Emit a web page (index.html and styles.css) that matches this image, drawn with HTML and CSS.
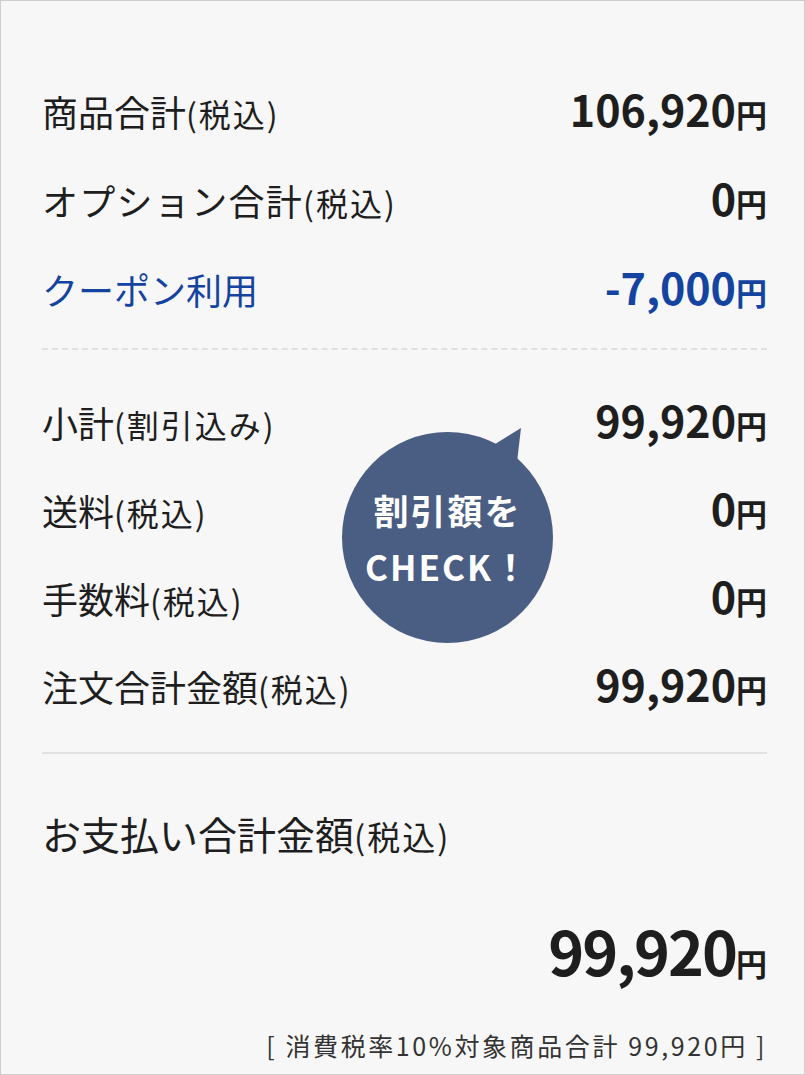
FILE: index.html
```html
<!DOCTYPE html>
<html lang="ja">
<head>
<meta charset="utf-8">
<link rel="stylesheet" href="styles.css">
</head>
<body>
<div class="panel">
  <div class="group group-top">
    <div class="row"><span class="label">商品合計<small>(税込)</small></span><span class="value">106,920<small>円</small></span></div>
    <div class="row"><span class="label wide">オプション合計<small>(税込)</small></span><span class="value">0<small>円</small></span></div>
    <div class="row coupon"><span class="label">クーポン利用</span><span class="value">-7,000<small>円</small></span></div>
  </div>
  <hr class="dashed">
  <div class="group group-mid">
    <div class="row"><span class="label">小計<small>(割引込み)</small></span><span class="value">99,920<small>円</small></span></div>
    <div class="row"><span class="label">送料<small>(税込)</small></span><span class="value">0<small>円</small></span></div>
    <div class="row"><span class="label">手数料<small>(税込)</small></span><span class="value">0<small>円</small></span></div>
    <div class="row"><span class="label">注文合計金額<small>(税込)</small></span><span class="value">99,920<small>円</small></span></div>
  </div>
  <hr class="solid">
  <div class="pay-label">お支払い合計金額<small>(税込)</small></div>
  <div class="pay-total">99,920<small>円</small></div>
  <div class="note">[ 消費税率10%対象商品合計 99,920円 ]</div>
  <div class="bubble"><span>割引額を</span><span>CHECK！</span></div>
</div>
</body>
</html>
```
FILE: styles.css
```css
html, body {
  margin: 0;
  padding: 0;
}
body {
  font-family: "Noto Sans CJK JP", "Noto Sans", sans-serif;
  color: #1e1e1e;
}
.panel {
  position: relative;
  box-sizing: border-box;
  width: 805px;
  height: 1075px;
  border: 1px solid #cfcfcf;
  background: #f7f7f7;
  padding: 63px 37px 0 41px;
}
.row {
  display: flex;
  justify-content: space-between;
  align-items: baseline;
  height: 89px;
  line-height: 89px;
}
.group-mid .row {
  height: 88px;
  line-height: 88px;
}
.label {
  font-size: 36px;
  font-weight: 400;
}
.label.wide {
  letter-spacing: 1.3px;
}
.label small {
  font-size: 32px;
  letter-spacing: 2px;
}
.value {
  font-size: 43px;
  font-weight: 700;
}
.value small {
  font-size: 31px;
  font-weight: 700;
}
.coupon {
  color: #1443a0;
}
.dashed {
  margin: 17px 0 25px;
  border: 0;
  border-top: 2px dashed #e0e0e0;
  height: 0;
}
.solid {
  margin: 25px 0 0;
  border: 0;
  border-top: 2px solid #e2e2e2;
  height: 0;
}
.pay-label {
  margin-top: 47px;
  font-size: 39px;
  line-height: 64px;
}
.pay-label small {
  font-size: 33px;
  letter-spacing: 2px;
}
.pay-total {
  margin-top: 42px;
  text-align: right;
  font-size: 61px;
  font-weight: 700;
  line-height: 80px;
  letter-spacing: -2px;
}
.pay-total small {
  font-size: 31px;
  letter-spacing: 0;
}
.note {
  margin-top: 27px;
  text-align: right;
  font-size: 25px;
  line-height: 30px;
  letter-spacing: 2.6px;
  color: #333;
}
.bubble {
  position: absolute;
  left: 341px;
  top: 431px;
  width: 211px;
  height: 211px;
  border-radius: 50%;
  background: #4a5d83;
  color: #fff;
  font-weight: 700;
  font-size: 35px;
  line-height: 56px;
  letter-spacing: 2px;
  display: flex;
  flex-direction: column;
  align-items: center;
  justify-content: center;
}
.bubble::after {
  content: "";
  position: absolute;
  left: 140px;
  top: -6px;
  width: 50px;
  height: 50px;
  background: #4a5d83;
  clip-path: polygon(39px 2px, 10px 20px, 35px 36px);
}
```
